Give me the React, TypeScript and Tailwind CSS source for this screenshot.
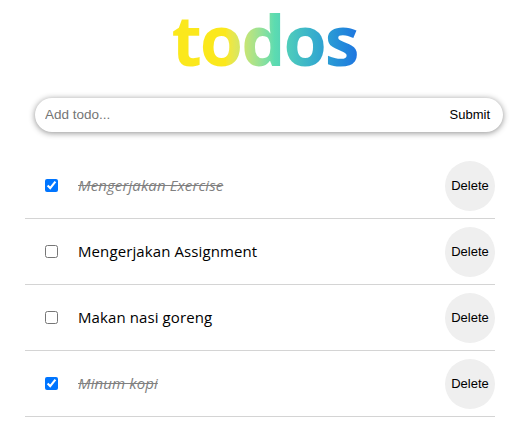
import React from "react";

const todos = [
  { text: "Mengerjakan Exercise", done: true },
  { text: "Mengerjakan Assignment", done: false },
  { text: "Makan nasi goreng", done: false },
  { text: "Minum kopi", done: true },
];

export default function App() {
  return (
    <div className="w-[529px] h-[446px] bg-white overflow-hidden font-['Liberation_Sans',Arial,sans-serif]">
      <h1 className="h-[78px] text-center text-[70px] leading-[78px] font-bold font-['Open_Sans',sans-serif] tracking-[-2px]">
        <span className="inline-block h-[78px] px-1 bg-gradient-to-r from-[#fbe81c] from-30% via-[#5ddcb0] via-55% to-[#1f6ee2] bg-clip-text text-transparent">
          todos
        </span>
      </h1>
      <form className="ml-[35px] mt-[20px] w-[468px] h-[34px] flex items-center rounded-full bg-white shadow-[0_1px_6px_rgba(0,0,0,0.45)] pl-[10px] pr-[13px]">
        <input
          className="flex-1 outline-none text-[13.5px] text-black placeholder:text-[#757575]"
          placeholder="Add todo..."
        />
        <button type="button" className="text-[13px] text-black">
          Submit
        </button>
      </form>
      <ul className="ml-[25px] mt-[21px] w-[470px]">
        {todos.map((t) => (
          <li
            key={t.text}
            className="h-[66px] flex items-center border-b border-[#d4d4d4]"
          >
            <input
              type="checkbox"
              defaultChecked={t.done}
              className="ml-[20px] w-[13px] h-[13px] accent-[#0075ff]"
            />
            <span
              className={
                "ml-[20px] flex-1 text-[15px] tracking-[0.1px] font-['Open_Sans',sans-serif] " +
                (t.done ? "italic line-through text-[#808080]" : "text-black")
              }
            >
              {t.text}
            </span>
            <button
              type="button"
              className="w-[50px] h-[50px] rounded-full bg-[#efefef] text-[13px] text-black"
            >
              Delete
            </button>
          </li>
        ))}
      </ul>
    </div>
  );
}
